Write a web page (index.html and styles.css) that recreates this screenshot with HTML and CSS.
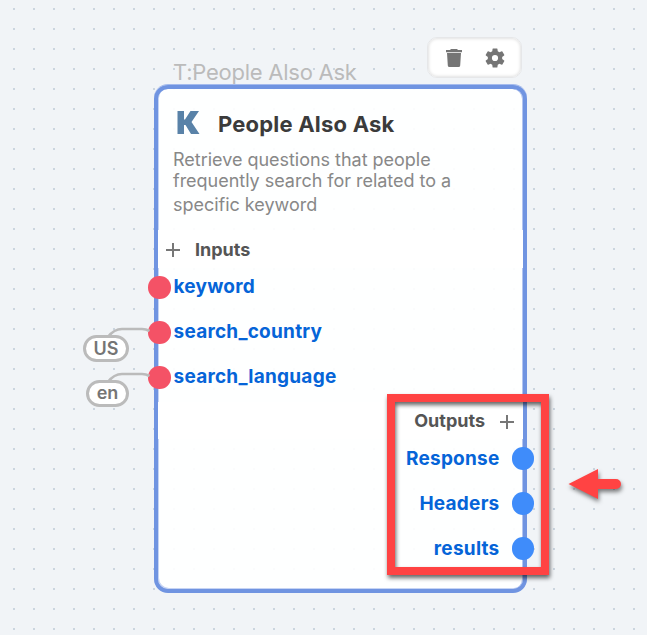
FILE: index.html
```html
<!DOCTYPE html>
<html lang="en">
<head>
<meta charset="utf-8">
<title>People Also Ask</title>
<link rel="stylesheet" href="styles.css">
</head>
<body>
<main class="canvas">
  <div class="node-tag">T:People Also Ask</div>
  <div class="toolbar">
    <svg width="20" height="20" viewBox="0 0 20 20"><path d="M2 2h4l1-1h6l1 1h4v2.200H2zM3 5h14l-.8 12.400q-.1 1.600-1.700 1.600h-9q-1.600 0-1.700-1.600z"/></svg>
    <svg width="20" height="20" viewBox="2 2 20 20"><path d="M19.14 12.94c.04-.3.06-.61.06-.94s-.02-.64-.07-.94l2.03-1.58a.49.49 0 0 0 .12-.61l-1.92-3.32a.49.49 0 0 0-.59-.22l-2.39.96a7 7 0 0 0-1.62-.94l-.36-2.54a.48.48 0 0 0-.48-.41h-3.84a.48.48 0 0 0-.47.41l-.36 2.54c-.59.24-1.13.57-1.62.94l-2.39-.96a.48.48 0 0 0-.59.22L2.74 8.87a.48.48 0 0 0 .12.61l2.03 1.58c-.05.3-.09.63-.09.94s.02.64.07.94l-2.03 1.58a.49.49 0 0 0-.12.61l1.92 3.32c.12.22.37.29.59.22l2.39-.96c.5.38 1.03.7 1.62.94l.36 2.54c.05.24.24.41.48.41h3.84c.24 0 .44-.17.47-.41l.36-2.54a7 7 0 0 0 1.62-.94l2.39.96c.22.08.47 0 .59-.22l1.92-3.32a.48.48 0 0 0-.12-.61zM12 15.100a3.100 3.100 0 1 1 0-6.200 3.100 3.100 0 0 1 0 6.200z"/></svg>
  </div>

  <section class="node">
    <header class="head">
      <svg class="logo" width="23" height="23" viewBox="0 0 23 23"><path d="M.5 0H7v8.500h1L13.500 0H22L14.500 11 22.500 23H14L8.500 14H7v9H.5z"/></svg>
      <h1 class="title">People Also Ask</h1>
    </header>
    <div class="description">
      <div class="line line-1">Retrieve questions that people</div>
      <div class="line line-2">frequently search for related to a</div>
      <div class="line line-3">specific keyword</div>
    </div>
    <div class="group inputs-head">
      <svg class="plus" width="16" height="16" viewBox="0 0 16 16"><path d="M8 1v14M1 8h14"/></svg>
      <span>Inputs</span>
    </div>
    <ul class="ports inputs">
      <li><i class="dot"></i><span class="name">keyword</span></li>
      <li><i class="dot"></i><span class="name">search_country</span></li>
      <li><i class="dot"></i><span class="name">search_language</span></li>
    </ul>
    <div class="group outputs-head">
      <span>Outputs</span>
      <svg class="plus" width="16" height="16" viewBox="0 0 16 16"><path d="M8 1v14M1 8h14"/></svg>
    </div>
    <ul class="ports outputs">
      <li><span class="name">Response</span><i class="dot"></i></li>
      <li><span class="name">Headers</span><i class="dot"></i></li>
      <li><span class="name">results</span><i class="dot"></i></li>
    </ul>
  </section>

  <svg class="wires" width="60" height="70" viewBox="0 0 60 70"><path d="M5 17Q11 9 19 9h20q4 0 7.500 2M5 62Q11 54 19 54h20q4 0 7.500 2"/></svg>
  <div class="value value-country">US</div>
  <div class="value value-language">en</div>

  <div class="highlight"></div>
  <svg class="arrow" width="70" height="50" viewBox="0 0 70 50"><path d="M8.5 19 38 4v10h18a5 5 0 0 1 0 10H38v10z"/></svg>
</main>
</body>
</html>
```
FILE: styles.css
```css
* { box-sizing: border-box; }
body { margin: 0; font-family: Inter, "Liberation Sans", sans-serif; }
.canvas {
  position: relative;
  width: 647px;
  height: 635px;
  overflow: hidden;
  background: conic-gradient(from 90deg at 18px 18px, #cbd5df 90deg, transparent 0) -5px -10px / 20px 20px #f1f4f7;
}
.node-tag {
  position: absolute;
  left: 173px;
  top: 58px;
  font-size: 22px;
  line-height: 28px;
  letter-spacing: -.25px;
  color: #bbb;
  white-space: nowrap;
}
.toolbar {
  position: absolute;
  left: 427px;
  top: 37px;
  width: 95px;
  height: 41px;
  display: flex;
  align-items: center;
  padding-left: 16px;
  gap: 21px;
  background: #fff;
  border-radius: 10px;
  border: 1px solid #e6e7e9;
  box-shadow: inset 0 0 3px 1px #e2e2e2;
  fill: #757575;
}
.node {
  position: absolute;
  left: 154px;
  top: 85px;
  width: 373px;
  height: 508px;
  border: 4px solid #7094e1;
  border-radius: 14px;
  background: rgba(255, 255, 255, .92);
  background-clip: padding-box;
  box-shadow: inset 1px -1px #c6d4f4, inset -1px 0 #b3c5f0, 0 -1px #a5bbed;
}
.head { display: flex; align-items: center; height: 60px; padding: 10px 0 0 19px; }
.logo { fill: #5982a8; position: relative; top: -2px; }
.title { margin: 0 0 0 18px; font-size: 22px; line-height: 28px; font-weight: 700; letter-spacing: .2px; color: #3b3b3b; white-space: nowrap; }
.description { height: 81px; padding-left: 15px; font-size: 18px; letter-spacing: -.02px; color: #888; white-space: nowrap; }
.line { height: 21px; line-height: 21px; }
.line-2 { height: 24px; }
.group { display: flex; align-items: center; font-size: 18px; font-weight: 700; color: #555; }
.plus { stroke: #777; stroke-width: 2; fill: none; }
.inputs-head { height: 38px; padding-left: 7px; gap: 14px; background: #fff; }
.inputs-head .plus, .outputs-head .plus { position: relative; top: 1px; }
.outputs-head { height: 37px; padding-right: 8px; gap: 14px; justify-content: flex-end; background: #fff; }
.ports { list-style: none; margin: 0; padding: 0; color: #0564d8; font-size: 19px; font-weight: 700; letter-spacing: .24px; }
.ports li { display: flex; align-items: center; height: 45px; position: relative; top: -3px; }
.inputs { height: 134px; }
.inputs li { margin-left: -10px; }
.outputs li { justify-content: flex-end; margin-right: -11px; }
.dot { width: 22.5px; height: 22.5px; border-radius: 50%; flex: none; }
.inputs .dot { background: #f45266; margin-right: 3px; }
.outputs .dot { background: #3f8cfa; margin-left: 12px; }
.name { line-height: 24px; margin-top: -1px; }
.outputs .name { margin-top: 0; }
.wires { position: absolute; left: 103px; top: 320px; fill: none; stroke: #bbb; stroke-width: 2.7; }
.value {
  position: absolute;
  height: 27px;
  border: 3px solid #bbb;
  border-radius: 14px;
  background: #fff;
  color: #757575;
  font-size: 18px;
  line-height: 21px;
  font-weight: 600;
  text-align: center;
}
.value-country { left: 83px; top: 335px; width: 46px; }
.value-language { left: 86px; top: 380px; width: 43px; line-height: 20px; }
.highlight {
  position: absolute;
  left: 387px;
  top: 394px;
  width: 162px;
  height: 181px;
  border: 8px solid #ff4343;
  filter: drop-shadow(1px 3px 2px rgba(0, 0, 0, .6));
}
.arrow { position: absolute; left: 560px; top: 465px; fill: #ff4343; filter: drop-shadow(1px 3px 2px rgba(0, 0, 0, .5)); }
```
